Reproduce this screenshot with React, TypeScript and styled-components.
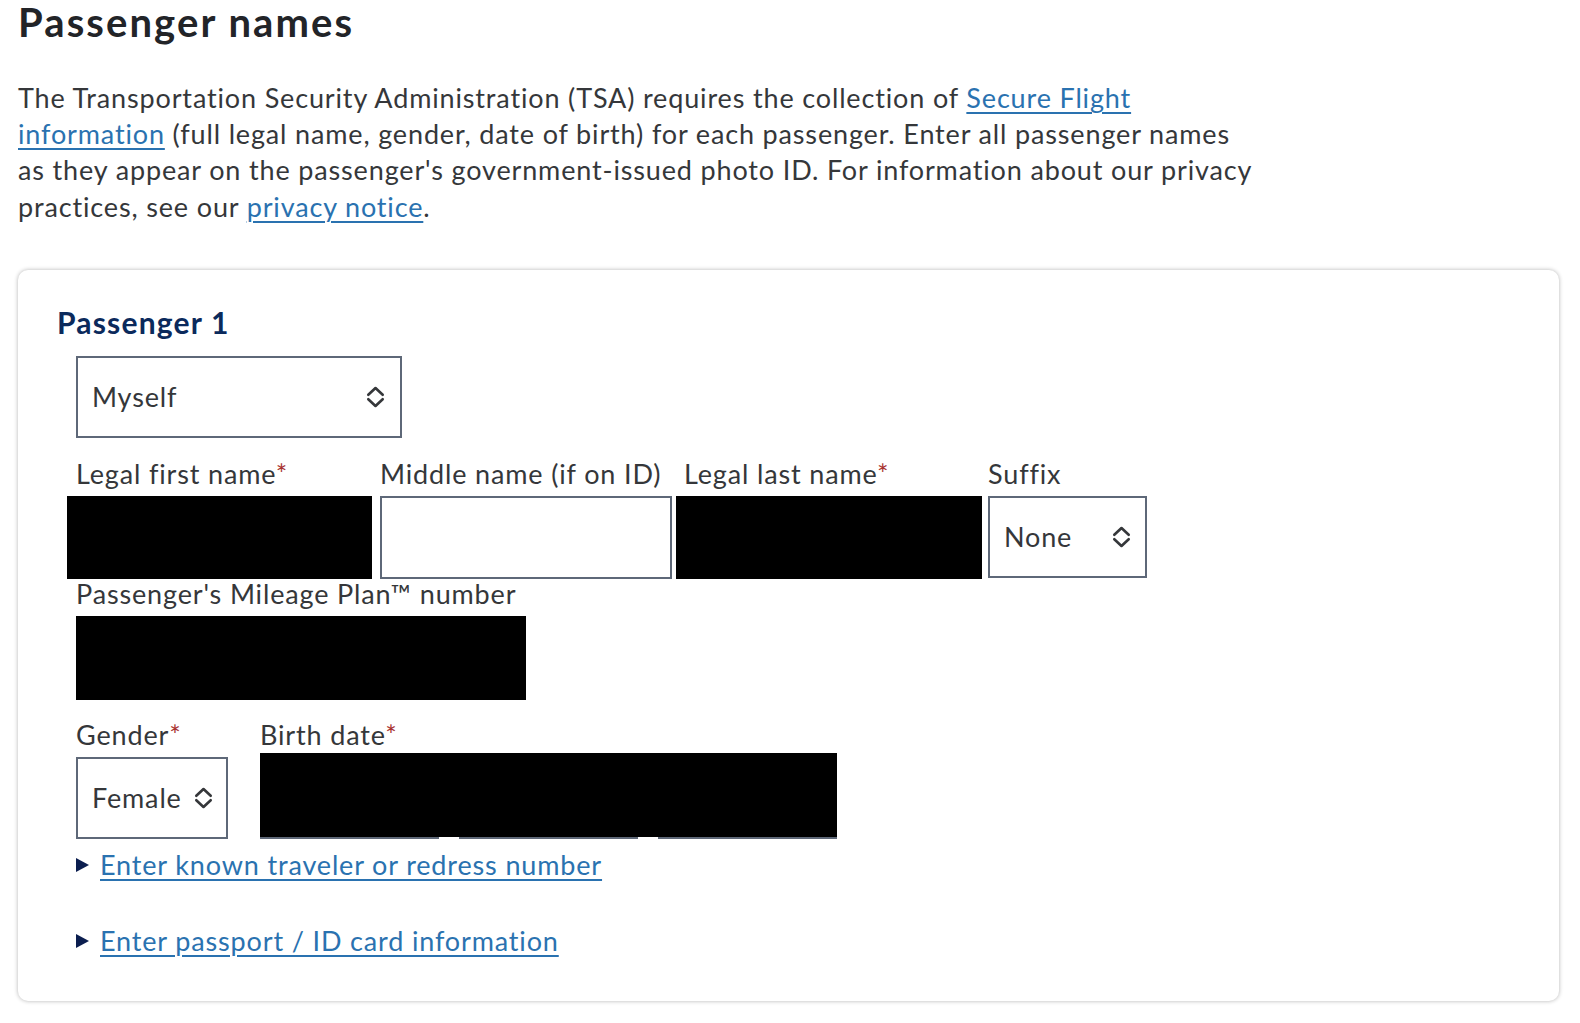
import styled, { createGlobalStyle } from 'styled-components'

const GlobalStyle = createGlobalStyle`
  * { box-sizing: border-box; }
  body {
    margin: 0;
    background: #fff;
    font-family: Lato, "Liberation Sans", sans-serif;
    font-size: 27px;
    letter-spacing: 0.85px;
    color: #35373a;
  }
`

const Chevrons = () => (
  <svg width="19" height="22" viewBox="0 0 19 22" fill="none">
    <path d="M2.3 8.8 L9.5 2 L16.7 8.8" stroke="#35373a" strokeWidth="2.6" strokeLinecap="round" strokeLinejoin="round" />
    <path d="M2.3 13.2 L9.5 20 L16.7 13.2" stroke="#35373a" strokeWidth="2.6" strokeLinecap="round" strokeLinejoin="round" />
  </svg>
)

const App = () => {
  return (
    <Page>
      <GlobalStyle />
      <Heading>Passenger names</Heading>
      <Intro>
        The Transportation Security Administration (TSA) requires the collection of <Link href="#">Secure Flight</Link>
        <br />
        <Link href="#">information</Link> (full legal name, gender, date of birth) for each passenger. Enter all passenger names
        <br />
        as they appear on the passenger's government-issued photo ID. For information about our privacy
        <br />
        practices, see our <Link href="#">privacy notice</Link>.
      </Intro>

      <Card>
        <CardTitle>Passenger 1</CardTitle>
        <Fields>
          <TopSelect>
            <span>Myself</span>
            <Chevrons />
          </TopSelect>

          <NameRow>
            <Field>
              <Label>Legal first name<Req>*</Req></Label>
              <Input redacted bleedLeft={9} bleedRight={4} />
            </Field>
            <Field>
              <Label>Middle name (if on ID)</Label>
              <Input />
            </Field>
            <Field>
              <Label>Legal last name<Req>*</Req></Label>
              <Input redacted bleedLeft={8} bleedRight={6} />
            </Field>
            <Field>
              <Label>Suffix</Label>
              <Select width={159}>
                <span>None</span>
                <Chevrons />
              </Select>
            </Field>
          </NameRow>

          <Field>
            <Label>Passenger's Mileage Plan™ number</Label>
            <MileageInput redacted />
          </Field>

          <BirthRow>
            <Field>
              <Label>Gender<Req>*</Req></Label>
              <Select width={152} tight>
                <span>Female</span>
                <Chevrons />
              </Select>
            </Field>
            <Field>
              <Label>Birth date<Req>*</Req></Label>
              <DateGroup>
                <DatePart />
                <DatePart />
                <DatePart />
              </DateGroup>
            </Field>
          </BirthRow>

          <Disclosure>
            <Triangle />
            <Link href="#">Enter known traveler or redress number</Link>
          </Disclosure>
          <Disclosure>
            <Triangle />
            <Link href="#">Enter passport / ID card information</Link>
          </Disclosure>
        </Fields>
      </Card>
    </Page>
  )
}

const Page = styled.div`
  padding: 0 21px 22px 18px;
`

const Heading = styled.h1`
  margin: 0 0 1px;
  font-size: 40px;
  line-height: 44px;
  font-weight: 700;
  letter-spacing: 2.1px;
  color: #222428;
`

const Intro = styled.p`
  margin: 36px 0 0;
  line-height: 36.2px;
`

const Link = styled.a`
  color: #2a72b0;
  text-decoration: underline;
  text-decoration-thickness: 2px;
  text-underline-offset: 4px;
`

const Card = styled.section`
  margin-top: 45px;
  background: #fff;
  border-radius: 10px;
  box-shadow: 0 0 4px rgba(0, 0, 0, 0.3);
  padding: 32px 39px 40px;
`

const CardTitle = styled.h2`
  margin: 0;
  font-size: 30px;
  line-height: 40px;
  font-weight: 700;
  letter-spacing: 1.2px;
  color: #0b2a5c;
`

const Fields = styled.div`
  padding-left: 19px;
  display: flex;
  flex-direction: column;
  align-items: flex-start;
`

const Select = styled.div<{ width: number; tight?: boolean }>`
  width: ${p => p.width}px;
  height: 82px;
  border: 2px solid #5e6878;
  background: #fff;
  display: flex;
  align-items: center;
  justify-content: space-between;
  padding: 0 ${p => (p.tight ? 13 : 14)}px 0 14px;
`

const TopSelect = styled(Select).attrs({ width: 326 })`
  margin-top: 14px;
  padding-right: 15px;
`

const NameRow = styled.div`
  margin-top: 21px;
  display: grid;
  grid-template-columns: 292px 292px 292px 159px;
  column-gap: 12px;
`

const Field = styled.div`
  display: flex;
  flex-direction: column;
`

const Label = styled.label`
  line-height: 30px;
  padding-bottom: 7px;
  white-space: nowrap;
`

const Req = styled.span`
  color: #a8322f;
`

const Input = styled.div<{ redacted?: boolean; bleedLeft?: number; bleedRight?: number }>`
  height: 83px;
  margin-left: ${p => -(p.bleedLeft ?? 0)}px;
  width: calc(100% + ${p => (p.bleedLeft ?? 0) + (p.bleedRight ?? 0)}px);
  border: 2px solid ${p => (p.redacted ? '#000' : '#5e6878')};
  background: ${p => (p.redacted ? '#000' : '#fff')};
`

const MileageInput = styled(Input)`
  width: 450px;
  height: 84px;
`

const BirthRow = styled.div`
  margin-top: 20px;
  display: flex;
  align-items: flex-end;
  gap: 32px;
`

const DateGroup = styled.div`
  margin-top: -4px;
  display: flex;
  gap: 20px;
  height: 86px;
  background: linear-gradient(#000, #000) top left / 100% calc(100% - 2px) no-repeat;
`

const DatePart = styled.div`
  width: 179px;
  height: 100%;
  background: #000;
  border-bottom: 2px solid #5e6878;
`

const Disclosure = styled.div`
  margin-top: 6px;
  display: flex;
  align-items: center;
  gap: 11px;
  line-height: 40px;
  & + & {
    margin-top: 36px;
  }
`

const Triangle = styled.span`
  width: 0;
  height: 0;
  border-top: 7px solid transparent;
  border-bottom: 7px solid transparent;
  border-left: 13px solid #0b1e4f;
`

export default App
